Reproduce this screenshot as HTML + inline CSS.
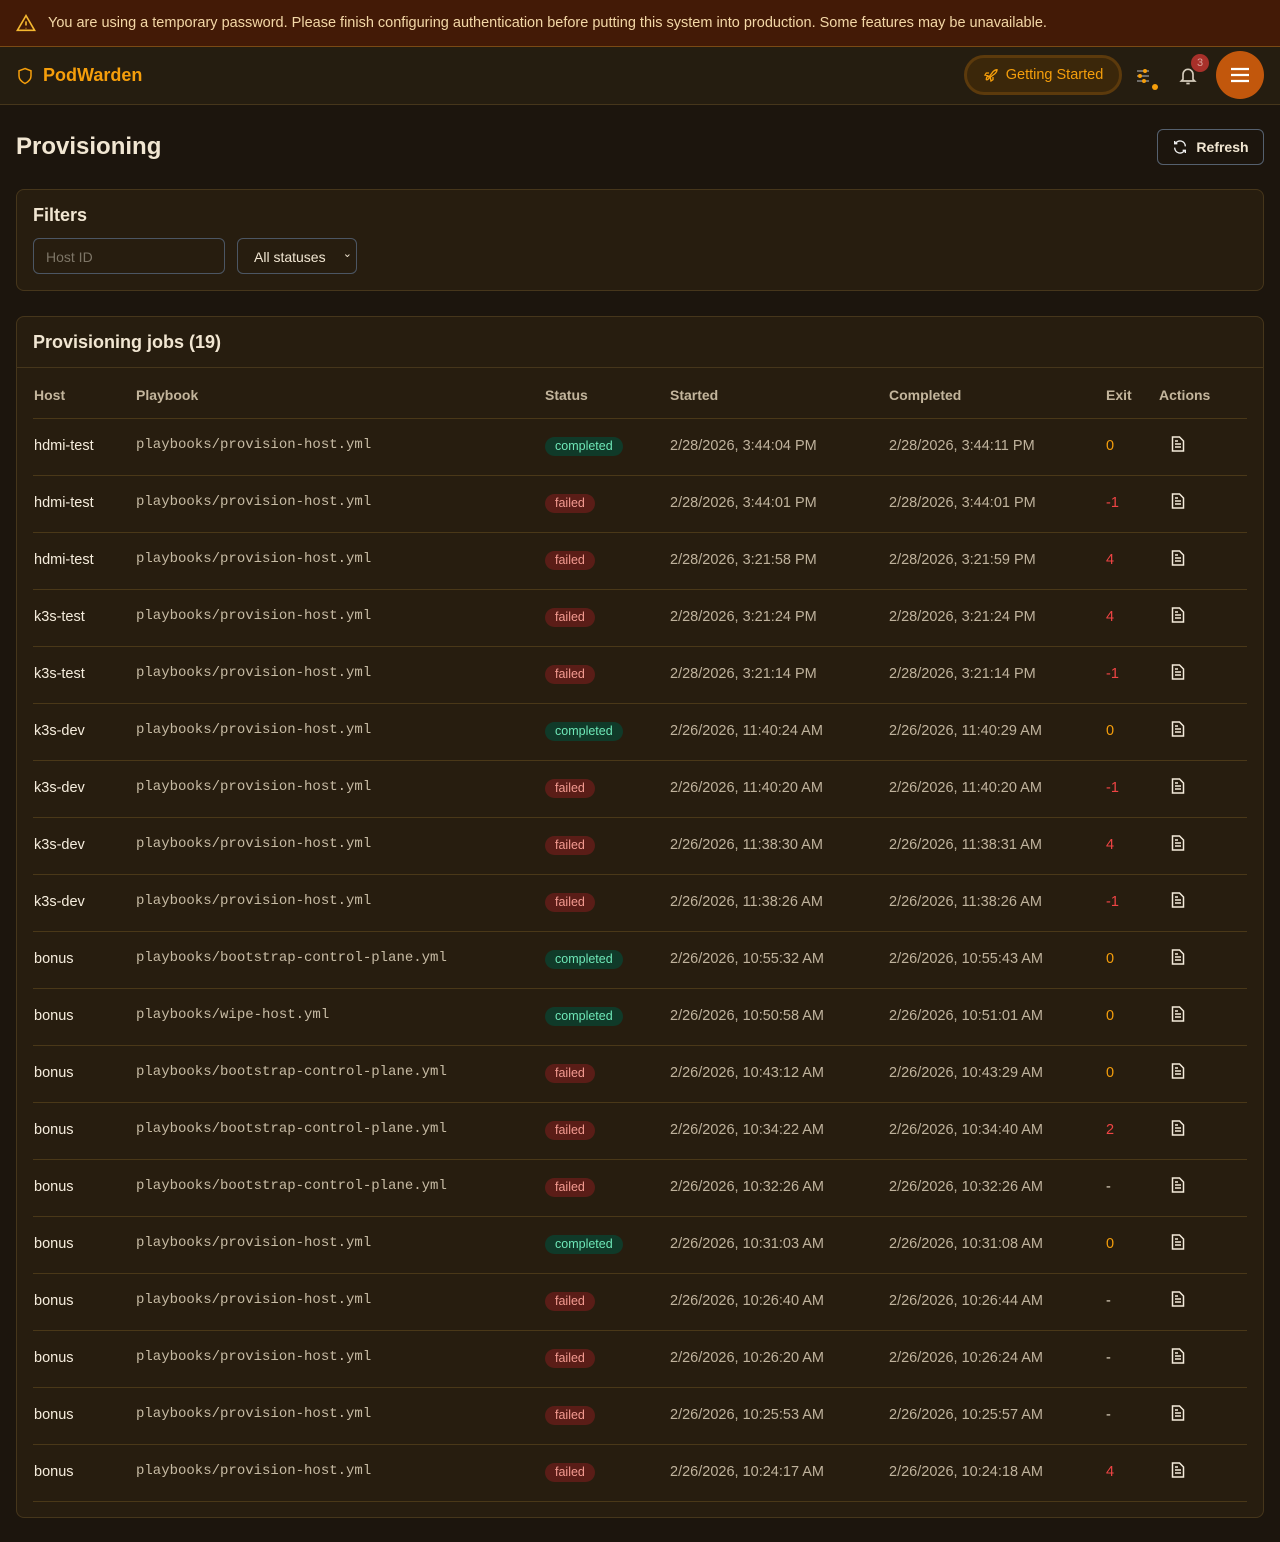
<!DOCTYPE html>
<html><head><meta charset="utf-8"><style>
*{box-sizing:border-box;margin:0;padding:0}
body{width:1280px;height:1542px;background:#1c150d;font-family:"Liberation Sans",sans-serif;color:#f1e6d2;overflow:hidden}
.banner{height:47px;background:#431a06;border-bottom:1px solid #7a4a14;display:flex;align-items:center;padding-left:16px;font-size:14.5px;color:#f3d7a6}
.banner svg{margin-right:12px}
.nav{height:58px;background:#251d10;border-bottom:1px solid #46361b;display:flex;align-items:center;padding:0 16px;position:relative}
.logo{color:#f59e0b;font-weight:bold;font-size:18px;display:flex;align-items:center;gap:9px}
.gs{position:absolute;left:964px;top:8px;width:158px;height:40px;border-radius:20px;border:3px solid #5c3a0c;background:#3b270a;display:flex;align-items:center;justify-content:center;gap:7px;color:#f59e0b;font-size:14.5px}
.menu{position:absolute;left:1216px;top:4px;width:48px;height:48px;border-radius:50%;background:#c2570c;display:flex;align-items:center;justify-content:center}
.badge{position:absolute;left:1191px;top:7px;width:18px;height:18px;border-radius:50%;background:#a8302a;color:#d9a39a;font-size:11px;text-align:center;line-height:18px}
h1{position:absolute;left:16px;top:133px;font-size:24px;font-weight:bold}
.refresh{position:absolute;left:1157px;top:129px;width:107px;height:36px;border:1px solid #55606e;border-radius:6px;display:flex;align-items:center;justify-content:center;gap:8px;font-size:14px;font-weight:bold}
.card{position:absolute;left:16px;width:1248px;background:#271d0f;border:1px solid #46361b;border-radius:8px}
.f1{top:189px;height:102px}
.f1 h2{position:absolute;left:16px;top:15px;font-size:18px}
.inp{position:absolute;left:16px;top:48px;width:192px;height:36px;border:1px solid #4c5663;border-radius:6px;color:#7d7566;font-size:14px;padding:10px 12px}
.sel{position:absolute;left:220px;top:48px;width:120px;height:36px;border:1px solid #4c5663;border-radius:6px;font-size:14px;padding:10px 16px}
.sel span{position:absolute;right:4px;top:8px;font-size:11px}
.f2{top:316px;height:1202px}
.f2 h2{position:absolute;left:16px;top:15px;font-size:18px}
.f2 .hr{position:absolute;left:0;right:0;top:50px;border-top:1px solid #46361b}
table{position:absolute;left:16px;top:51px;width:1214px;border-collapse:collapse;font-size:14.5px}
th{height:50px;text-align:left;color:#c3b59c;font-size:14px;font-weight:bold;border-bottom:1px solid #4a3818;padding:4px 0 0 1px}
td{height:57px;border-bottom:1px solid #4a3818;padding:0 0 1px 1px;color:#bfb29c}
td.h{color:#f5ecdc;padding-left:1px}
td.p{font-family:"Liberation Mono",monospace;color:#c7bba4;font-size:14px;padding-bottom:3px}
.b{display:inline-block;height:19px;line-height:19px;border-radius:10px;font-size:12.5px;padding:0 10px}
.c{background:#103a29;color:#6ee7b7}
.x{background:#5a1d17;color:#f39a90}
.e0{color:#f59e0b}.er{color:#ef4444}.ed{color:#e0d5c0}
</style></head><body>
<div class="banner"><svg width="20" height="18" viewBox="0 0 24 22" fill="none" stroke="#f5b830" stroke-width="2"><path d="M12 2L1.5 20h21z"/><path d="M12 9v5M12 17v.5"/></svg>You are using a temporary password. Please finish configuring authentication before putting this system into production. Some features may be unavailable.</div>
<div class="nav"><div class="logo"><svg width="18" height="20" viewBox="0 0 24 24" fill="none" stroke="#f59e0b" stroke-width="2"><path d="M12 2l8 3v7c0 5-4 8-8 10-4-2-8-5-8-10V5z"/></svg>PodWarden</div>
<div class="gs"><svg width="16" height="16" viewBox="0 0 24 24" fill="none" stroke="#f59e0b" stroke-width="2"><path d="M5 19c0-3 1-5 3-5s2 2 0 4-3 1-3 1zM9 15l6-8c2-2 5-3 6-3 0 1-1 4-3 6l-8 6zM9 9H5l-2 3 5 1M15 15v4l-3 2-1-5"/></svg>Getting Started</div>
<svg style="position:absolute;left:1136px;top:20px" width="26" height="24" viewBox="0 0 26 24"><path d="M1 4h12M1 9h12M1 14h12" stroke="#888" stroke-width="1.5"/><circle cx="9" cy="4" r="2" fill="#f59e0b"/><circle cx="4" cy="9" r="2" fill="#f59e0b"/><circle cx="8" cy="14" r="2" fill="#f59e0b"/><circle cx="19" cy="20" r="3" fill="#f59e0b"/></svg>
<svg style="position:absolute;left:1178px;top:18px" width="20" height="22" viewBox="0 0 24 24" fill="none" stroke="#d5ccbc" stroke-width="2"><path d="M6 16V10a6 6 0 0 1 12 0v6l2 2H4zM10 21h4"/></svg>
<div class="badge">3</div>
<div class="menu"><svg width="20" height="16" viewBox="0 0 20 16" stroke="#fff" stroke-width="2.2"><path d="M1 2h18M1 8h18M1 14h18"/></svg></div>
</div>
<h1>Provisioning</h1>
<div class="refresh"><svg width="16" height="16" viewBox="0 0 24 24" fill="none" stroke="#eee" stroke-width="2"><path d="M20 11A8 8 0 0 0 5 7M4 3v4h4M4 13a8 8 0 0 0 15 4M20 21v-4h-4"/></svg>Refresh</div>
<div class="card f1"><h2>Filters</h2><div class="inp">Host ID</div><div class="sel">All statuses<span>&#8964;</span></div></div>
<div class="card f2"><h2>Provisioning jobs (19)</h2><div class="hr"></div>
<table><colgroup><col style="width:102px"><col style="width:409px"><col style="width:125px"><col style="width:219px"><col style="width:217px"><col style="width:53px"><col></colgroup>
<tr><th>Host</th><th>Playbook</th><th>Status</th><th>Started</th><th>Completed</th><th>Exit</th><th>Actions</th></tr>
<tbody id="tb"></tbody></table></div>
<script>
var R=[["hdmi-test","provision-host","c","2/28/2026, 3:44:04 PM","2/28/2026, 3:44:11 PM","0"],
["hdmi-test","provision-host","x","2/28/2026, 3:44:01 PM","2/28/2026, 3:44:01 PM","-1"],
["hdmi-test","provision-host","x","2/28/2026, 3:21:58 PM","2/28/2026, 3:21:59 PM","4"],
["k3s-test","provision-host","x","2/28/2026, 3:21:24 PM","2/28/2026, 3:21:24 PM","4"],
["k3s-test","provision-host","x","2/28/2026, 3:21:14 PM","2/28/2026, 3:21:14 PM","-1"],
["k3s-dev","provision-host","c","2/26/2026, 11:40:24 AM","2/26/2026, 11:40:29 AM","0"],
["k3s-dev","provision-host","x","2/26/2026, 11:40:20 AM","2/26/2026, 11:40:20 AM","-1"],
["k3s-dev","provision-host","x","2/26/2026, 11:38:30 AM","2/26/2026, 11:38:31 AM","4"],
["k3s-dev","provision-host","x","2/26/2026, 11:38:26 AM","2/26/2026, 11:38:26 AM","-1"],
["bonus","bootstrap-control-plane","c","2/26/2026, 10:55:32 AM","2/26/2026, 10:55:43 AM","0"],
["bonus","wipe-host","c","2/26/2026, 10:50:58 AM","2/26/2026, 10:51:01 AM","0"],
["bonus","bootstrap-control-plane","x","2/26/2026, 10:43:12 AM","2/26/2026, 10:43:29 AM","0"],
["bonus","bootstrap-control-plane","x","2/26/2026, 10:34:22 AM","2/26/2026, 10:34:40 AM","2"],
["bonus","bootstrap-control-plane","x","2/26/2026, 10:32:26 AM","2/26/2026, 10:32:26 AM","-"],
["bonus","provision-host","c","2/26/2026, 10:31:03 AM","2/26/2026, 10:31:08 AM","0"],
["bonus","provision-host","x","2/26/2026, 10:26:40 AM","2/26/2026, 10:26:44 AM","-"],
["bonus","provision-host","x","2/26/2026, 10:26:20 AM","2/26/2026, 10:26:24 AM","-"],
["bonus","provision-host","x","2/26/2026, 10:25:53 AM","2/26/2026, 10:25:57 AM","-"],
["bonus","provision-host","x","2/26/2026, 10:24:17 AM","2/26/2026, 10:24:18 AM","4"]];
var ic='<svg width="14" height="16" viewBox="0 0 14 16" fill="none" stroke="#f5ecdc" stroke-width="1.5"><path d="M1.5 1h7l4 4v10h-11z"/><path d="M4 8h6M4 11h6M4 5h3"/></svg>';
var h='';R.forEach(function(r){var ec=r[5]=="0"?"e0":r[5]=="-"?"ed":"er";
h+='<tr><td class="h">'+r[0]+'</td><td class="p">playbooks/'+r[1]+'.yml</td><td><span class="b '+r[2]+'">'+(r[2]=="c"?"completed":"failed")+'</span></td><td>'+r[3]+'</td><td>'+r[4]+'</td><td class="'+ec+'">'+r[5]+'</td><td style="padding-left:13px">'+ic+'</td></tr>';});
document.getElementById('tb').innerHTML=h;
</script>
</body></html>
